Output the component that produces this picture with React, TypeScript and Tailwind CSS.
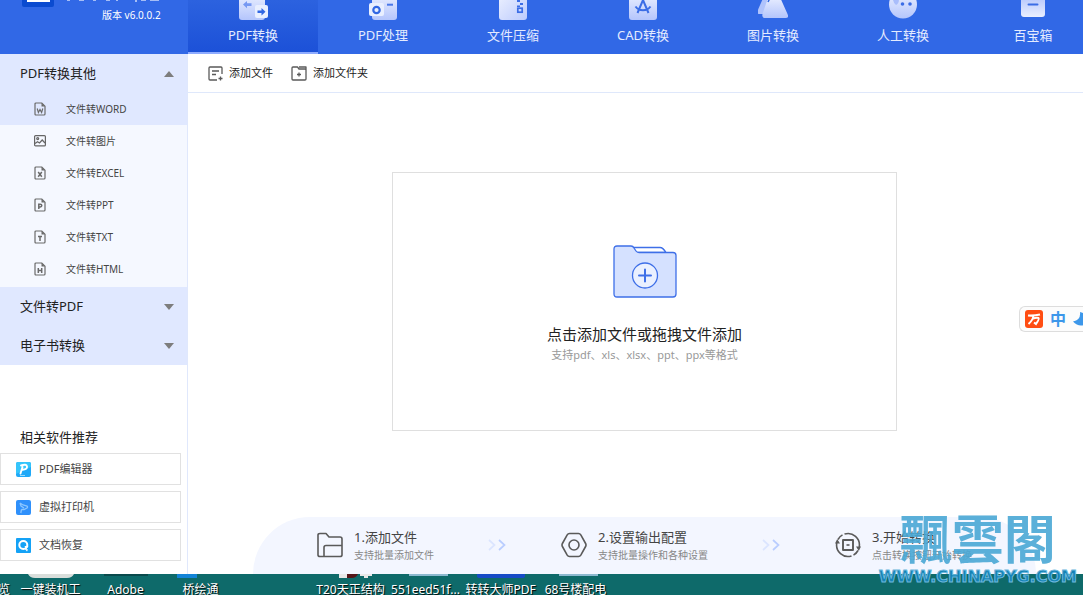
import { useState, type ReactNode } from 'react';

const strokeIcon = {
  fill: 'none',
  stroke: '#5a5a5a',
  strokeWidth: 1.3,
  strokeLinejoin: 'round' as const,
};

function TabGradient() {
  return (
    <defs>
      <linearGradient id="tabFill" x1="0" y1="0" x2="1" y2="1">
        <stop offset="0" stopColor="#eef2ff" />
        <stop offset="1" stopColor="#bccbfd" />
      </linearGradient>
      <linearGradient id="tabFade" x1="0" y1="0" x2="0" y2="1">
        <stop offset="0" stopColor="#eef2ff" />
        <stop offset="1" stopColor="#b4c5fc" />
      </linearGradient>
      <linearGradient id="tabRise" x1="0" y1="0" x2="0" y2="1">
        <stop offset="0" stopColor="#a9bdfb" />
        <stop offset="1" stopColor="#eaefff" />
      </linearGradient>
    </defs>
  );
}

const tabs: { label: string; icon: ReactNode }[] = [
  {
    label: 'PDF转换',
    icon: (
      <>
        <rect x="1" y="-8" width="26" height="28" rx="3" fill="url(#tabFade)" />
        <path d="M5 4.500 9 1v2.300h4.500v2.600H9v2.300z" fill="#7698f2" />
        <rect x="17" y="5" width="13" height="13" rx="2" fill="#e9efff" />
        <path d="M27.500 11.800 23.500 8v2.500h-4v2.600h4v2.500z" fill="#3167e3" />
      </>
    ),
  },
  {
    label: 'PDF处理',
    icon: (
      <>
        <rect x="4" y="-8" width="25" height="28" rx="3" fill="url(#tabFade)" />
        <rect x="1" y="3" width="15" height="13" rx="2" fill="#e9efff" />
        <circle cx="8.500" cy="10" r="3.200" fill="none" stroke="#3167e3" strokeWidth="2.200" />
        <path d="M19 4.700h6" stroke="#4a78e8" strokeWidth="2" />
      </>
    ),
  },
  {
    label: '文件压缩',
    icon: (
      <>
        <rect x="1" y="-8" width="28" height="28" rx="3" fill="url(#tabFill)" />
        <path d="M19 0h3v2h-3zM22 3h3v2h-3zM19 5.500h3v1.500h-3z" fill="#3b6de6" />
        <rect x="19.800" y="8.200" width="4.400" height="4" fill="none" stroke="#3b6de6" strokeWidth="1.700" />
      </>
    ),
  },
  {
    label: 'CAD转换',
    icon: (
      <>
        <rect x="1" y="-8" width="28" height="28" rx="3" fill="url(#tabFade)" />
        <path d="M15 0 9.500 13M15 0l5.500 13M7.500 6.500C11 11.500 19 11.500 22.500 6.500" fill="none" stroke="#3b6de6" strokeWidth="2" />
      </>
    ),
  },
  {
    label: '图片转换',
    icon: (
      <>
        <path d="M6-4-.5 11q-1 3 2 3h9L14-4z" fill="#b0c3fc" />
        <path d="M11-5 4.500 14q-1 4 3 4h20q4 0 2-4L21-5z" fill="url(#tabFade)" />
        <path d="m12-2-2 4" stroke="#3167e3" strokeWidth="1.500" />
      </>
    ),
  },
  {
    label: '人工转换',
    icon: (
      <>
        <circle cx="15" cy="4.500" r="14" fill="url(#tabFade)" />
        <path d="M5 0q1 4 3 5 3-1 3-6z" fill="#a9bdfb" />
        <circle cx="14.500" cy="4" r="1.800" fill="#3b6de6" />
        <circle cx="22" cy="4" r="1.800" fill="#3b6de6" />
      </>
    ),
  },
  {
    label: '百宝箱',
    icon: (
      <>
        <rect x="3" y="-8" width="24" height="25" rx="3" fill="url(#tabRise)" />
        <path d="M10.500 4.500h9" stroke="#3b6de6" strokeWidth="2" strokeLinecap="round" />
      </>
    ),
  },
];

function FileIcon({ mark }: { mark: ReactNode }) {
  return (
    <svg width="12" height="14" viewBox="0 0 12 14" fill="none" stroke="#6a6a6a" strokeWidth="1.200">
      <path d="M2 1h5.800L11 4.200V12q0 1-1 1H2q-1 0-1-1V2q0-1 1-1z" />
      <path d="M7.500 1v3.500H11z" fill="#6a6a6a" stroke="none" />
      <g strokeWidth="1.500">{mark}</g>
    </svg>
  );
}

const formats = [
  { label: '文件转WORD', icon: <FileIcon mark={<path d="m3.200 6.500 1.200 4L6 7.500l1.600 3 1.200-4" strokeWidth="1.200" />} /> },
  {
    label: '文件转图片',
    icon: (
      <svg width="12" height="14" viewBox="0 0 12 14" fill="none" stroke="#666" strokeWidth="1.200">
        <rect x=".6" y="1.600" width="10.800" height="10.300" rx="1" />
        <circle cx="3.700" cy="4.600" r="1" />
        <path d="m1 9.500 2.500-1.800L5.500 9l2.700-3L11 9" />
      </svg>
    ),
  },
  { label: '文件转EXCEL', icon: <FileIcon mark={<path d="m4.200 6 3.600 4.800M7.800 6l-3.600 4.800" />} /> },
  { label: '文件转PPT', icon: <FileIcon mark={<path d="M4.800 11V6.300h1.400q1.600 0 1.600 1.300T6.200 9H5" />} /> },
  { label: '文件转TXT', icon: <FileIcon mark={<path d="M4 6.500h4M6 6.500V11" />} /> },
  { label: '文件转HTML', icon: <FileIcon mark={<path d="M4.300 6v5M7.700 6v5M4.300 8.500h3.400" />} /> },
];

const related = [
  {
    label: 'PDF编辑器',
    icon: (
      <svg width="15" height="15" viewBox="0 0 15 15">
        <rect width="15" height="15" rx="2" fill="#1fa9f8" />
        <path d="M0 2q0-2 2-2h11q2 0 2 2v3L0 12z" fill="#35c5fb" />
        <path d="M4.500 11.500 6.500 5M5 3.500q5.500-2 6 1T6.500 7.800" fill="none" stroke="#fff" strokeWidth="1.900" strokeLinecap="round" />
        <path d="M4 13.500h5" stroke="#b7e7ff" strokeWidth=".8" />
      </svg>
    ),
  },
  {
    label: '虚拟打印机',
    icon: (
      <svg width="15" height="15" viewBox="0 0 15 15">
        <rect width="15" height="15" rx="2" fill="#2f90fb" />
        <path d="m4 3 3 2 4 1q1 1 0 2L8 9.500H5.500M4 3l1 3 3 2M5.500 9.500 4.800 13" fill="none" stroke="#8cc6ff" strokeWidth="1.300" />
      </svg>
    ),
  },
  {
    label: '文档恢复',
    icon: (
      <svg width="15" height="15" viewBox="0 0 15 15">
        <rect width="15" height="15" rx="1" fill="#14a2f6" />
        <circle cx="7.300" cy="7" r="4" fill="none" stroke="#fff" strokeWidth="2" />
        <path d="M8.500 8h4l-2.300 3.500zM8 10l3 3.500 1-2z" fill="#fff" />
      </svg>
    ),
  },
];

const steps = [
  {
    title: '1.添加文件',
    note: '支持批量添加文件',
    icon: <path d="M3 1.500h6l3 3.500h11q2 0 2 2v16q0 1.500-2 1.500H3q-2 0-2-1.500V3q0-1.500 2-1.500zM7 24.500v-9q0-2 2-2h16" />,
  },
  {
    title: '2.设置输出配置',
    note: '支持批量操作和各种设置',
    icon: (
      <>
        <path d="M8.500 1.500h9q1.500 0 2.300 1.300l4.800 8.700q.8 1.500 0 3l-4.800 8.700q-.8 1.300-2.300 1.300h-9q-1.500 0-2.300-1.300L1.400 14.500q-.8-1.500 0-3l4.800-8.700Q7 1.500 8.500 1.500z" />
        <circle cx="13" cy="13" r="5" />
      </>
    ),
  },
  {
    title: '3.开始转换',
    note: '点击转换按钮开始转换',
    icon: (
      <>
        <path d="M1.800 11A11.400 11.400 0 0 0 16.500 23.900M24.200 15A11.400 11.400 0 0 0 9.500 2.100" />
        <path d="M7.500 2.900A11.400 11.400 0 0 0 3 7.500M18.500 23.100A11.400 11.400 0 0 0 23 18.500" />
        <path d="M0 11.500 2.200 7l2.800 4.500zM21 14.500h5L23.800 19z" fill="#5a5a5a" stroke="none" />
        <rect x="8" y="8" width="10" height="10" strokeWidth="1.900" />
        <path d="M11.500 13h3" />
      </>
    ),
  },
];

const shortcuts = ['览', '一键装机工', 'Adobe', '桥绘通', '', 'T20天正结构', '551eed51f...', '转转大师PDF', '68号楼配电'];

function Arrow({ up = false }: { up?: boolean }) {
  return (
    <svg width="10" height="6" viewBox="0 0 10 6" className={up ? '' : 'rotate-180'}>
      <path d="M5 0 10 6H0z" fill="#7d7d7d" />
    </svg>
  );
}

function Chevrons() {
  return (
    <svg width="19" height="12" viewBox="0 0 19 12" fill="none" strokeWidth="1.700" className="shrink-0">
      <path d="m1 1 5.500 5L1 11" stroke="#dbe5ff" />
      <path d="m11 1 5.500 5L11 11" stroke="#b9cdff" />
    </svg>
  );
}

function Header({ active, onSelect }: { active: string; onSelect: (label: string) => void }) {
  return (
    <header className="flex h-[54px] shrink-0 overflow-hidden bg-[#3168e6] text-[#e4ebff]">
      <div className="flex w-[188px] shrink-0 flex-col pl-[22px]">
        <svg width="140" height="8" viewBox="0 0 140 8">
          <path d="M0 0h32v5q0 2-2 2H2Q0 7 0 5z" fill="#0b4bd0" />
          <path d="M5 0h23v2H5z" fill="#fff" />
          <path d="M45 0h3v1h-3zM57 0h5v1h-5zM71 0h3v1h-3zM84 0h4v1h-4zM94 0h2v1h-2zM113 0h2v2h-2zM119 0h5v1h-5zM128 0h9v1h-9z" fill="#a5bdf6" />
        </svg>
        <span className="pl-20 text-[10px] leading-[14px] text-white">版本 v6.0.0.2</span>
      </div>
      <nav className="flex">
        {tabs.map((tab) => (
          <button
            key={tab.label}
            onClick={() => onSelect(tab.label)}
            className={
              'flex w-[130px] shrink-0 flex-col items-center gap-[5px] border-b-2 pb-px text-[13px] leading-5 ' +
              (tab.label === active
                ? 'border-[#8facff] bg-linear-to-b from-[#2c62df] to-[#1c51d8]'
                : 'border-transparent')
            }
          >
            <svg width="30" height="20" viewBox="0 0 30 20" className="shrink-0">
              <TabGradient />
              {tab.icon}
            </svg>
            {tab.label}
          </button>
        ))}
      </nav>
    </header>
  );
}

function Sidebar() {
  const [selected, setSelected] = useState('文件转WORD');
  const heading = 'flex h-[39px] w-full items-center justify-between bg-[#e0e8ff] pr-[13px] pl-5 text-[13px] text-[#222]';

  return (
    <aside className="flex w-[188px] shrink-0 flex-col border-r border-[#e0e8fc]">
      <button className={heading}>
        PDF转换其他
        <Arrow up />
      </button>
      <ul className="bg-[#f5f8ff] pb-0.5">
        {formats.map((f) => (
          <li key={f.label}>
            <button
              onClick={() => setSelected(f.label)}
              className={
                'flex h-8 w-full items-center gap-5 pl-[34px] text-[10px] text-[#444] ' +
                (selected === f.label ? 'bg-[#e0e8ff]' : '')
              }
            >
              {f.icon}
              {f.label}
            </button>
          </li>
        ))}
      </ul>
      <button className={heading}>
        文件转PDF
        <Arrow />
      </button>
      <button className={heading}>
        电子书转换
        <Arrow />
      </button>

      <section className="mt-auto pb-[13px]">
        <h2 className="mb-1.5 pl-5 text-[13px] leading-5 text-[#222]">相关软件推荐</h2>
        <div className="mr-1.5 flex flex-col gap-1.5">
          {related.map((r) => (
            <a
              key={r.label}
              href="#"
              className="flex h-8 items-center gap-2 border border-[#e1e1e1] pl-[15px] text-[11px] text-[#444]"
            >
              {r.icon}
              {r.label}
            </a>
          ))}
        </div>
      </section>
    </aside>
  );
}

function Workspace() {
  return (
    <main className="-mr-[18px] flex min-w-0 flex-1 flex-col">
      <div className="flex h-[39px] items-center gap-[18px] border-b border-[#dfe8fb] pl-5 text-[11px] text-[#222]">
        <button className="flex items-center gap-1.5">
          <svg width="15" height="15" viewBox="0 0 15 15" {...strokeIcon}>
            <path d="M14 8V2q0-1-1-1H2Q1 1 1 2v11q0 1 1 1h7M4 5h7M4 8.500h4M12.500 10.500v4M10.500 12.500h4" />
          </svg>
          添加文件
        </button>
        <button className="flex items-center gap-1.5">
          <svg width="16" height="15" viewBox="0 0 16 15" {...strokeIcon}>
            <path d="M2 1h4.500L8 3h6q1 0 1 1v9q0 1-1 1H2q-1 0-1-1V2q0-1 1-1zM8 1h7v3M8 6.500v4M6 8.500h4" />
          </svg>
          添加文件夹
        </button>
      </div>

      <button className="mx-[204px] mt-[79px] flex h-[259px] flex-col items-center border border-[#dfdfdf] pt-[72px]">
        <svg width="64" height="53" viewBox="0 0 64 53" fill="#d5e1ff" stroke="#3e6fe8" strokeWidth="1.300" className="mb-[26px]">
          <path d="M19 2.500h28q3 0 6 5H22z" fill="#fff" />
          <path d="M4 1h14q2 0 3 2l2 3q1 1.500 3 1.500h34q3 0 3 3V49q0 3-3 3H4q-3 0-3-3V4q0-3 3-3z" />
          <circle cx="32" cy="30.500" r="12.500" fill="#eaf0ff" />
          <path d="M32 24.500v12M26 30.500h12" strokeWidth="2" strokeLinecap="round" />
        </svg>
        <span className="text-[15px] leading-5 text-[#222]">点击添加文件或拖拽文件添加</span>
        <span className="text-[11px] leading-[22px] text-[#999]">支持pdf、xls、xlsx、ppt、ppx等格式</span>
      </button>

      <ol className="mx-[65px] mt-auto flex h-[57px] items-center justify-between rounded-t-full bg-[#f3f6ff] px-16 pb-0.5">
        {steps.map((s, i) => (
          <li key={s.title} className="contents">
            {i > 0 && <Chevrons />}
            <div className="flex items-center gap-[11px] whitespace-nowrap">
              <svg width="26" height="26" viewBox="0 0 26 26" {...strokeIcon} strokeWidth="1.600">
                {s.icon}
              </svg>
              <div>
                <p className="text-[13px] leading-5 text-[#444]">{s.title}</p>
                <p className="text-[10px] leading-4 text-[#888]">{s.note}</p>
              </div>
            </div>
          </li>
        ))}
      </ol>
    </main>
  );
}

function ImeBar() {
  return (
    <div className="absolute top-[306px] right-0 flex h-[26px] w-16 items-center gap-[7px] overflow-hidden rounded-l-md border border-r-0 border-[#ddd] bg-[#fcfcfc] pl-[5px]">
      <svg width="18" height="18" viewBox="0 0 18 18" className="shrink-0">
        <rect width="18" height="18" rx="3" fill="#ff4d12" />
        <path d="M3 5.500q6 .5 12-1M8.500 5.500Q8 10 3.500 14M7.500 8.800q4-1.500 6-.8 1 1-2.500 6L9 12.500" fill="none" stroke="#fff" strokeWidth="2" />
      </svg>
      <span className="text-[16px] leading-5 font-bold text-[#3c97ea]">中</span>
      <svg width="14" height="14" viewBox="0 0 14 14" className="shrink-0">
        <path d="M7 0q1 8-7 9.500 4 4.500 9 4 5-1 5-7 0-5-7-6.500z" fill="#3c97ea" />
      </svg>
    </div>
  );
}

function Desktop() {
  return (
    <footer className="relative h-[21px] shrink-0 overflow-hidden bg-[#0e6a6a]">
      <svg width="610" height="4" viewBox="0 0 610 4" className="block">
        <path d="M28 0h46q-2 4-7 4H35q-5 0-7-4z" fill="#d9dedb" />
        <path d="M104 0h44v2h-44z" fill="#0a4a4c" />
        <path d="M177 0h20v4h-20z" fill="#1384d8" />
        <path d="M339 0h8v4h-8zM360 0h12v2h-4v2h-4V2h-4z" fill="#e8e8e8" />
        <path d="M347 0h11q-2 4-6 4h-5z" fill="#551519" />
        <path d="M409 0h39v2h-39zM559 0h39v2h-39z" fill="#8cb9cf" />
        <path d="M477 0h48v2q0 2-3 2h-42q-3 0-3-2z" fill="#164bc7" />
      </svg>
      <ul className="-ml-[62px] flex pt-1 text-[12px] leading-4 text-white [text-shadow:1px_1px_1px_#000]">
        {shortcuts.map((name, i) => (
          <li key={i} className={'w-[75px] shrink-0 whitespace-nowrap ' + (i === 0 ? 'pr-[3px] text-right' : 'text-center')}>
            {name}
          </li>
        ))}
      </ul>
    </footer>
  );
}

function Watermark() {
  return (
    <div className="pointer-events-none absolute right-1.5 bottom-2 flex flex-col items-center whitespace-nowrap text-[#4aa8d5]">
      <span className="pb-1 font-['Noto_Sans_CJK_TC',sans-serif] text-[52px] leading-[52px] font-bold opacity-90">飄雲閣</span>
      <span className="font-['DejaVu_Sans',sans-serif] text-[16px] leading-5 font-bold text-[#1583b5] [-webkit-text-stroke:1px_#6bb6dc]">
        WWW.CHINAPYG.COM
      </span>
    </div>
  );
}

export default function App() {
  const [activeTab, setActiveTab] = useState('PDF转换');

  return (
    <div className="relative flex min-h-screen flex-col overflow-hidden bg-white font-['Noto_Sans','Noto_Sans_CJK_SC',sans-serif]">
      <Header active={activeTab} onSelect={setActiveTab} />
      <div className="flex flex-1">
        <Sidebar />
        <Workspace />
      </div>
      <Desktop />
      <ImeBar />
      <Watermark />
    </div>
  );
}
